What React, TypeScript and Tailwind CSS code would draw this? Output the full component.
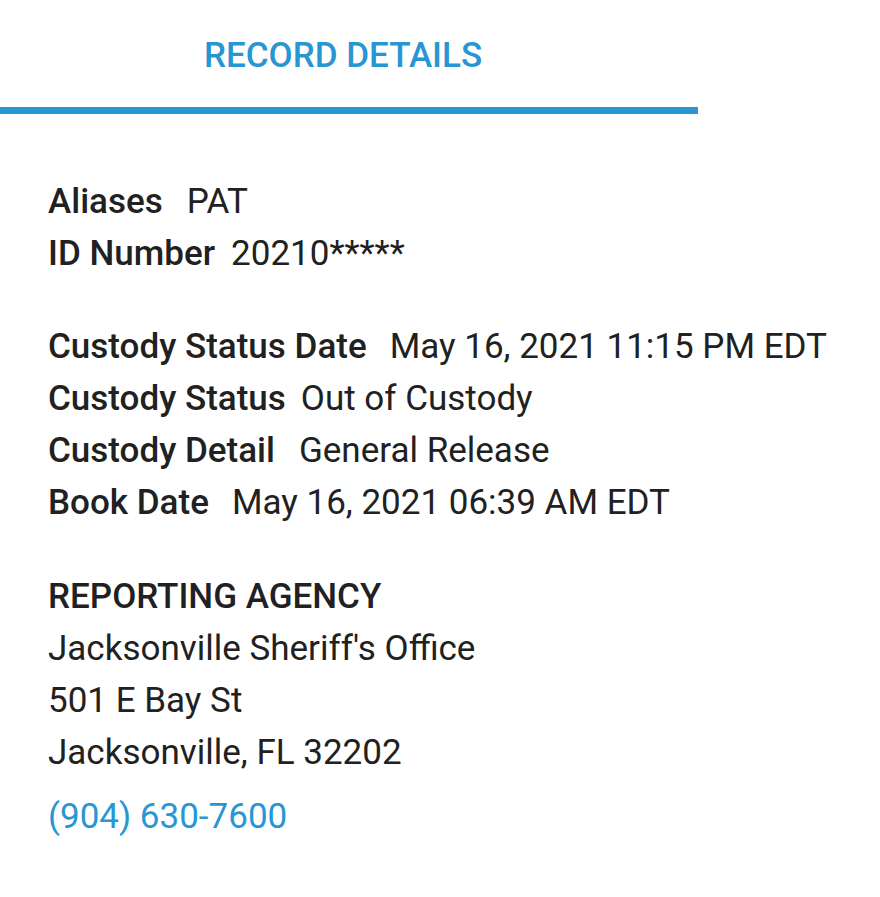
import React from "react";

type Row = { label: string; value: string; gap: string };

const idRows: Row[] = [
  { label: "Aliases", value: "PAT", gap: "ml-[24px]" },
  { label: "ID Number", value: "20210*****", gap: "ml-[16px]" },
];

const custodyRows: Row[] = [
  { label: "Custody Status Date", value: "May 16, 2021 11:15 PM EDT", gap: "ml-[23px]" },
  { label: "Custody Status", value: "Out of Custody", gap: "ml-[15px]" },
  { label: "Custody Detail", value: "General Release", gap: "ml-[24px]" },
  { label: "Book Date", value: "May 16, 2021 06:39 AM EDT", gap: "ml-[23px]" },
];

const DetailRow: React.FC<{ row: Row }> = ({ row }) => (
  <div className="flex items-baseline h-[52px] leading-[52px]">
    <span className="font-medium">{row.label}</span>
    <span className={row.gap}>{row.value}</span>
  </div>
);

const App: React.FC = () => {
  return (
    <div className="w-[880px] h-[897px] bg-white text-[#212121] font-['Roboto',sans-serif] text-[35px]">
      <div className="w-[698px] border-b-[7px] border-[#2996d4]">
        <div className="h-[107px] flex justify-center pt-[30px]">
          <span className="text-[#2996d4] font-medium text-[35px] leading-[52px] -ml-[12px]">
            RECORD DETAILS
          </span>
        </div>
      </div>

      <div className="pl-[48px] pt-[62px]">
        <div>
          {idRows.map((r) => (
            <DetailRow key={r.label} row={r} />
          ))}
        </div>

        <div className="mt-[41px]">
          {custodyRows.map((r) => (
            <DetailRow key={r.label} row={r} />
          ))}
        </div>

        <div className="mt-[42px]">
          <div className="font-medium leading-[52px]">REPORTING AGENCY</div>
          <div className="leading-[52px]">Jacksonville Sheriff's Office</div>
          <div className="leading-[52px]">501 E Bay St</div>
          <div className="leading-[52px]">Jacksonville, FL 32202</div>
          <div className="leading-[52px] mt-[12px] text-[#2996d4]">(904) 630-7600</div>
        </div>
      </div>
    </div>
  );
};

export default App;
